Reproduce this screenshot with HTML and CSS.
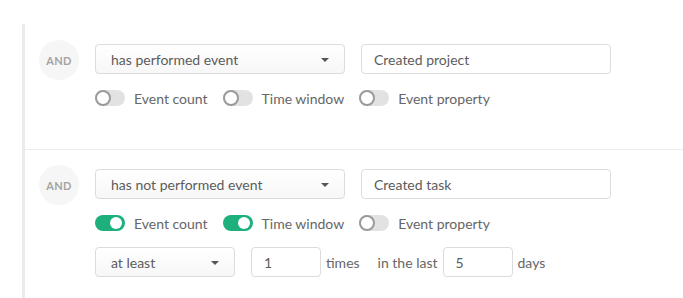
FILE: index.html
```html
<!DOCTYPE html>
<html lang="en">
<head>
  <meta charset="UTF-8">
  <meta name="viewport" content="width=device-width, initial-scale=1.0">
  <title>Segment conditions</title>
  <link rel="stylesheet" href="styles.css">
</head>
<body>
  <div class="conditions">
    <div class="condition">
      <div class="operator">AND</div>
      <div class="condition-body">
        <div class="row">
          <div class="select wide">has performed event<span class="caret"></span></div>
          <div class="input wide">Created project</div>
        </div>
        <div class="row toggles">
          <label class="toggle"><span class="switch"></span>Event count</label>
          <label class="toggle"><span class="switch"></span>Time window</label>
          <label class="toggle"><span class="switch"></span>Event property</label>
        </div>
      </div>
    </div>

    <div class="condition">
      <div class="operator">AND</div>
      <div class="condition-body">
        <div class="row">
          <div class="select wide">has not performed event<span class="caret"></span></div>
          <div class="input wide">Created task</div>
        </div>
        <div class="row toggles">
          <label class="toggle"><span class="switch on"></span>Event count</label>
          <label class="toggle"><span class="switch on"></span>Time window</label>
          <label class="toggle"><span class="switch"></span>Event property</label>
        </div>
        <div class="row">
          <div class="select small">at least<span class="caret"></span></div>
          <div class="input number">1</div>
          <span class="unit">times</span>
          <span class="unit spaced">in the last</span>
          <div class="input number">5</div>
          <span class="unit">days</span>
        </div>
      </div>
    </div>
  </div>
</body>
</html>
```

FILE: styles.css
```css
body {
  font-family: 'Lato', 'Open Sans', sans-serif;
  background-color: white;
  margin: 0;
  padding: 24px 0 0 22px;
  color: #666;
}
.conditions {
  border-left: 3px solid #ebebeb;
  height: 274px;
}
.condition {
  display: flex;
  padding: 19px 0 20px 14px;
}
.condition:first-child {
  border-bottom: 1px solid #ececec;
  padding-top: 20px;
  padding-bottom: 43px;
}
.operator {
  width: 40px;
  height: 40px;
  border-radius: 50%;
  background-color: #f6f6f6;
  color: #a4a4a4;
  font-size: 11px;
  font-weight: 700;
  letter-spacing: 0.3px;
  display: flex;
  align-items: center;
  justify-content: center;
  margin: -4px 16px 0 0;
  flex-shrink: 0;
}
.condition-body {
  display: flex;
  flex-direction: column;
  gap: 16px;
}
.row {
  display: flex;
  align-items: center;
  gap: 16px;
}
.select,
.input {
  box-sizing: border-box;
  height: 30px;
  border: 1px solid #dcdcdc;
  border-radius: 4px;
  font-size: 14px;
  color: #5c5c5c;
  display: flex;
  align-items: center;
}
.select {
  position: relative;
  padding-left: 15px;
  background: linear-gradient(#fff, #f7f7f7);
}
.input {
  padding-left: 12px;
  background-color: white;
}
.wide {
  width: 250px;
}
.small {
  width: 140px;
}
.number {
  width: 70px;
}
.caret {
  position: absolute;
  right: 15px;
  top: 13px;
  border-left: 4px solid transparent;
  border-right: 4px solid transparent;
  border-top: 4px solid #555;
}
.toggles {
  gap: 15px;
  height: 16px;
}
.toggle {
  display: flex;
  align-items: center;
  gap: 9px;
  font-size: 14px;
  color: #666;
}
.switch {
  position: relative;
  width: 30px;
  height: 16px;
  border-radius: 8px;
  background-color: #e2e2e2;
}
.switch::after {
  content: "";
  position: absolute;
  left: 0;
  top: 0;
  box-sizing: border-box;
  width: 16px;
  height: 16px;
  border-radius: 50%;
  background-color: white;
  border: 2px solid #9a9a9a;
}
.switch.on {
  background-color: #1daf7c;
}
.switch.on::after {
  left: 15px;
  top: 2px;
  width: 12px;
  height: 12px;
  border: none;
}
.unit {
  font-size: 14px;
  color: #666;
  margin-left: -11px;
}
.unit.spaced {
  margin-left: 2px;
  margin-right: -11px;
}
```
